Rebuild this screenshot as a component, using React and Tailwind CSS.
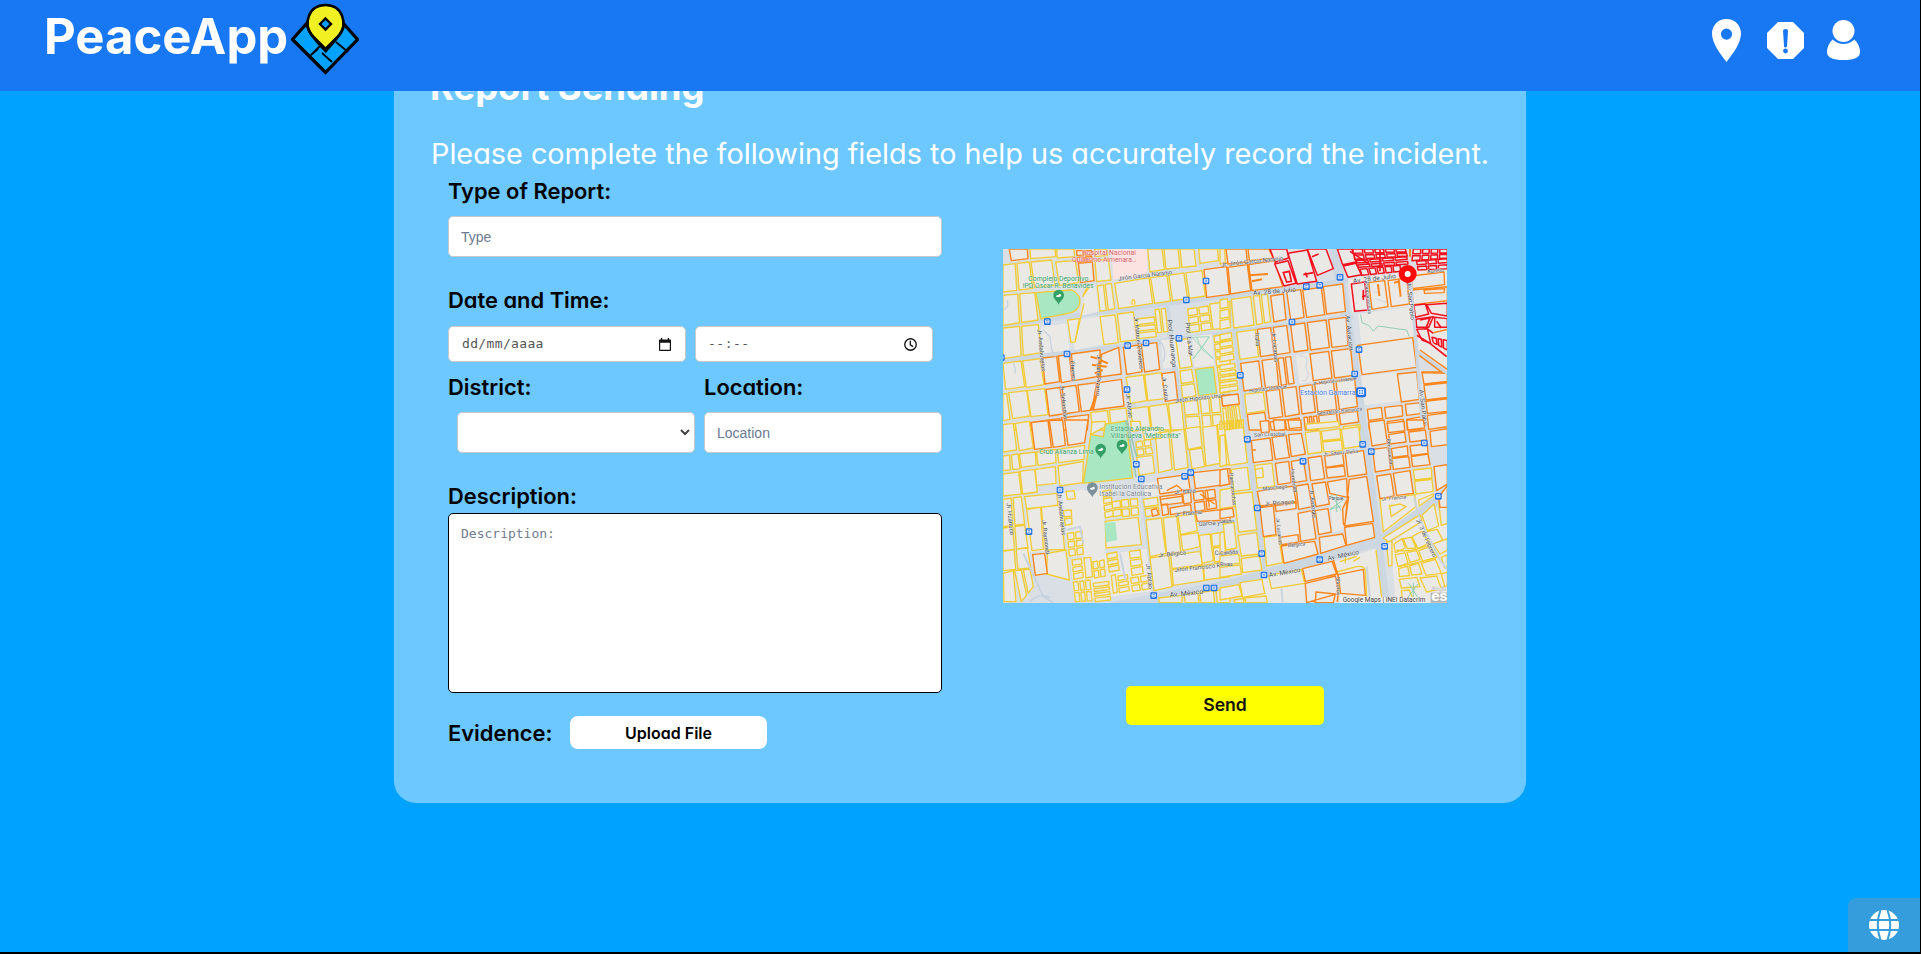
import React from "react";

const YELLOW = "#f2cc35";
const ORANGE = "#fb861c";
const RED = "#f50f1e";
const LAND = "#ebe9e6";

// Splits a quadrilateral (clockwise corners) into cols x rows city blocks.
function split([x0, y0, x1, y1, x2, y2, x3, y3, cols = 1, rows = 1]) {
  const at = (u, v) => {
    const x = (1 - u) * (1 - v) * x0 + u * (1 - v) * x1 + u * v * x2 + (1 - u) * v * x3;
    const y = (1 - u) * (1 - v) * y0 + u * (1 - v) * y1 + u * v * y2 + (1 - u) * v * y3;
    return `${x.toFixed(1)} ${y.toFixed(1)}`;
  };
  const w = Math.hypot(x1 - x0, y1 - y0);
  const h = Math.hypot(x3 - x0, y3 - y0);
  const gu = cols > 1 ? 3 / w : 0;
  const gv = rows > 1 ? 3 / h : 0;
  let d = "";
  for (let i = 0; i < cols; i++) {
    for (let j = 0; j < rows; j++) {
      const a = i / cols + (i ? gu : 0);
      const b = (i + 1) / cols - (i < cols - 1 ? gu : 0);
      const c = j / rows + (j ? gv : 0);
      const e = (j + 1) / rows - (j < rows - 1 ? gv : 0);
      d += `M${at(a, c)}L${at(b, c)}L${at(b, e)}L${at(a, e)}Z`;
    }
  }
  return d;
}

function Blocks({ list, color, width = 4 }) {
  return <path d={list.map(split).join("")} fill={LAND} stroke={color} strokeWidth={width} strokeLinejoin="round" />;
}

function Stops({ at }) {
  return at.map(([x, y]) => (
    <g key={`${x}-${y}`}>
      <rect x={x - 10} y={y - 10} width="20" height="20" rx="4" fill="#1f6fe5" />
      <path d={`M${x - 5} ${y - 5}h10v9h-10zM${x - 5} ${y}h10`} fill="none" stroke="#fff" strokeWidth="2.5" />
    </g>
  ));
}

function Label({ x, y, r = 0, size = 18, fill = "#3f4955", children }) {
  return (
    <text x={x} y={y} transform={`rotate(${r} ${x} ${y})`} fontSize={size} fill={fill} stroke="#fff" strokeWidth="1.2" paintOrder="stroke">
      {children}
    </text>
  );
}

function ParkPin({ x, y, color = "#34a065" }) {
  return (
    <g>
      <path d={`M${x} ${y + 26}C${x - 3} ${y + 14} ${x - 16} ${y + 12} ${x - 16} ${y - 3}a16 16 0 0 1 32 0C${x + 16} ${y + 12} ${x + 3} ${y + 14} ${x} ${y + 26}z`} fill={color} />
      <path d={`M${x - 8} ${y + 2}q2-7 7-4q4-9 9 0q-1 5-8 5z`} fill="#fff" />
    </g>
  );
}

const NW = {
  land: [[210, 242, 300, 230, 312, 313, 225, 330], [122, 262, 200, 250, 208, 330, 130, 340], [483, 300, 526, 297, 535, 380, 490, 385], [576, 288, 636, 282, 642, 376, 584, 382], [258, 138, 286, 137, 297, 215, 240, 228]],
  yellow: [
    [9, 75, 88, 66, 98, 145, 9, 156, 2, 1], [93, 66, 155, 60, 165, 135, 104, 143], [90, 27, 165, 27, 167, 50, 92, 56],
    [167, 66, 226, 62, 236, 128, 178, 136], [170, 27, 222, 27, 224, 50, 172, 54], [285, 62, 325, 57, 333, 120, 290, 125], [284, 27, 320, 27, 322, 46, 286, 50],
    [443, 27, 486, 27, 493, 88, 450, 96], [492, 27, 582, 27, 588, 78, 498, 87, 2, 1], [596, 27, 652, 27, 656, 62, 600, 70],
    [9, 166, 104, 158, 114, 240, 9, 256, 2, 1], [292, 138, 334, 130, 344, 206, 300, 214, 2, 1],
    [344, 130, 447, 113, 458, 190, 356, 206], [452, 113, 606, 92, 616, 168, 464, 190, 3, 1],
    [9, 264, 115, 254, 124, 338, 9, 356, 2, 1], [203, 240, 238, 236, 226, 305, 213, 308],
    [300, 230, 345, 225, 355, 308, 312, 314], [352, 222, 400, 216, 410, 300, 362, 305],
    [410, 237, 463, 231, 469, 290, 417, 296, 1, 3], [465, 209, 496, 205, 503, 274, 473, 278, 2, 1],
    [563, 207, 624, 198, 634, 268, 570, 277, 2, 3], [629, 192, 690, 184, 690, 262, 639, 268],
    [528, 300, 563, 296, 576, 380, 540, 385], [642, 288, 690, 281, 690, 372, 650, 378, 1, 4],
    [9, 370, 63, 363, 74, 440, 17, 448, 1, 1], [68, 363, 120, 356, 132, 434, 79, 442],
    [26, 458, 80, 452, 90, 528, 38, 536], [82, 452, 134, 446, 144, 524, 93, 530], [9, 462, 20, 460, 30, 538, 9, 542],
    [378, 412, 430, 405, 440, 482, 392, 490], [434, 405, 484, 398, 494, 476, 444, 482],
    [540, 393, 575, 388, 588, 468, 548, 474, 1, 2], [652, 382, 690, 378, 690, 455, 662, 460],
    [272, 518, 378, 504, 386, 570, 278, 570, 2, 1], [392, 506, 444, 500, 452, 570, 400, 570], [448, 499, 500, 492, 512, 570, 456, 570],
    [505, 492, 544, 486, 552, 570, 514, 570], [552, 486, 592, 480, 602, 570, 560, 570, 1, 2], [600, 478, 658, 470, 666, 570, 610, 570, 2, 2],
    [9, 556, 88, 545, 92, 570, 9, 570, 2, 1],
  ],
  orange: [
    [28, 27, 82, 27, 84, 56, 34, 62], [230, 32, 274, 32, 276, 62, 232, 66, 2, 2], [235, 70, 277, 66, 282, 122, 242, 128],
    [612, 89, 680, 80, 688, 163, 620, 172], [664, 27, 690, 27, 690, 68, 670, 70],
    [127, 354, 170, 349, 179, 425, 135, 432], [175, 348, 208, 344, 216, 422, 184, 428], [214, 342, 300, 330, 302, 408, 222, 422],
    [300, 345, 356, 322, 364, 402, 290, 412], [370, 322, 416, 315, 426, 395, 380, 403], [424, 314, 470, 308, 479, 388, 434, 396],
    [138, 448, 228, 436, 238, 515, 148, 528, 2, 1], [234, 435, 290, 428, 276, 510, 244, 515], [298, 428, 364, 418, 372, 498, 280, 510],
    [486, 401, 524, 396, 533, 478, 496, 484], [90, 548, 178, 536, 182, 570, 94, 570, 2, 1], [184, 534, 266, 524, 262, 570, 188, 570], [666, 472, 690, 469, 690, 496, 669, 498],
  ],
};

const NE = {
  land: [[414, 222, 578, 200, 586, 288, 424, 312], [228, 345, 268, 340, 276, 425, 238, 432], [424, 408, 532, 396, 545, 482, 434, 496], [384, 116, 682, 80, 682, 190, 396, 214], [584, 196, 682, 190, 682, 390, 596, 330]],
  yellow: [
    [0, 27, 14, 27, 16, 68, 0, 72], [0, 180, 22, 176, 32, 262, 0, 268, 1, 3], [34, 178, 92, 170, 102, 255, 42, 264],
    [100, 168, 142, 163, 152, 245, 110, 254, 2, 1], [0, 284, 34, 278, 42, 358, 0, 366, 1, 4], [50, 277, 106, 269, 116, 350, 60, 358],
    [0, 376, 44, 370, 54, 450, 0, 458, 1, 5], [74, 463, 130, 456, 137, 512, 80, 520], [8, 505, 56, 497, 66, 570, 14, 570, 4, 1], [370, 560, 420, 554, 420, 570, 370, 570],
  ],
  orange: [
    [18, 27, 78, 27, 82, 66, 24, 72], [84, 27, 146, 27, 160, 54, 88, 62], [24, 82, 82, 74, 92, 152, 32, 162], [86, 74, 164, 62, 188, 140, 96, 152],
    [152, 168, 190, 162, 198, 238, 162, 246], [200, 154, 242, 149, 252, 232, 212, 240], [248, 150, 304, 142, 314, 224, 260, 232], [310, 140, 368, 132, 376, 214, 320, 222],
    [112, 268, 152, 263, 162, 344, 122, 350], [160, 262, 200, 257, 210, 338, 170, 344], [212, 255, 254, 249, 264, 330, 222, 336], [262, 248, 318, 240, 328, 322, 272, 330], [326, 239, 378, 232, 384, 316, 336, 322],
    [62, 370, 116, 363, 126, 444, 72, 453], [126, 361, 168, 356, 176, 438, 136, 443], [174, 355, 212, 350, 222, 430, 184, 436, 2, 1], [270, 342, 326, 334, 336, 414, 280, 422], [334, 333, 392, 326, 400, 406, 344, 414],
    [414, 316, 578, 293, 590, 382, 426, 404], [532, 402, 590, 396, 598, 478, 544, 486], [5, 468, 54, 462, 58, 492, 8, 498],
    [138, 453, 178, 448, 188, 530, 148, 536], [186, 446, 228, 440, 238, 522, 196, 530], [238, 440, 276, 434, 286, 516, 246, 522], [284, 432, 340, 425, 350, 508, 294, 516], [348, 424, 404, 417, 412, 500, 358, 508],
    [82, 524, 134, 517, 142, 570, 88, 570], [150, 546, 190, 540, 194, 570, 154, 570], [196, 540, 238, 534, 244, 570, 200, 570], [252, 532, 290, 528, 294, 570, 256, 570, 3, 1], [296, 527, 350, 521, 354, 556, 300, 562], [358, 520, 412, 514, 416, 546, 362, 554],
    [442, 508, 484, 502, 488, 535, 446, 541], [494, 502, 546, 496, 548, 528, 498, 535], [556, 493, 604, 488, 607, 520, 560, 526], [446, 552, 492, 546, 494, 570, 448, 570], [502, 545, 550, 538, 552, 570, 504, 570], [560, 538, 608, 530, 610, 570, 562, 570],
    [606, 398, 682, 400, 682, 424, 612, 432], [612, 436, 682, 428, 682, 472, 618, 480], [618, 484, 682, 476, 682, 514, 622, 520], [622, 526, 682, 518, 682, 560, 626, 568],
    [446, 128, 494, 122, 504, 200, 456, 208], [504, 122, 560, 114, 568, 192, 514, 200], [574, 108, 672, 96, 674, 134, 576, 146], [576, 150, 682, 140, 682, 182, 580, 194], [612, 150, 674, 146, 672, 158, 614, 160],
  ],
  red: [
    [150, 27, 200, 27, 206, 54, 165, 66], [164, 72, 204, 62, 228, 130, 192, 138], [204, 40, 262, 30, 290, 124, 232, 132], [262, 27, 318, 27, 340, 86, 292, 106],
    [352, 27, 396, 27, 408, 66, 368, 74], [370, 78, 408, 70, 424, 104, 384, 112], [398, 27, 556, 27, 562, 48, 404, 58, 5, 2], [408, 62, 560, 50, 564, 72, 416, 82, 4, 2], [420, 88, 540, 76, 542, 94, 426, 106, 5, 1],
    [580, 27, 682, 27, 682, 54, 576, 62, 4, 2], [590, 64, 682, 56, 682, 86, 594, 90, 3, 2], [394, 132, 434, 126, 444, 210, 404, 214],
    [582, 196, 616, 192, 626, 222, 586, 232], [620, 194, 682, 190, 682, 228, 634, 220], [588, 238, 640, 230, 626, 262, 590, 262], [644, 232, 682, 236, 682, 262, 644, 262], [590, 268, 622, 266, 632, 310, 606, 300], [636, 292, 682, 302, 682, 330, 640, 308, 3, 1],
  ],
};

const SW = {
  land: [[240, 214, 310, 204, 316, 406, 250, 412], [80, 262, 180, 250, 196, 390, 84, 396], [430, 190, 470, 184, 476, 226, 436, 232], [212, 418, 440, 386, 452, 514, 224, 545], [186, 218, 250, 208, 260, 404, 206, 412]],
  yellow: [
    [9, 14, 40, 10, 50, 90, 9, 96], [46, 10, 88, 4, 100, 84, 58, 92], [9, 108, 54, 102, 60, 146, 9, 152, 2, 1], [58, 102, 106, 96, 108, 136, 64, 142],
    [110, 96, 166, 88, 168, 128, 114, 136], [172, 88, 254, 76, 252, 118, 176, 128], [9, 162, 56, 156, 64, 222, 9, 228], [60, 154, 104, 148, 112, 216, 68, 222], [106, 148, 166, 140, 168, 190, 110, 196],
    [174, 138, 250, 124, 248, 188, 180, 198], [276, 6, 316, 4, 316, 20, 272, 44], [392, 4, 420, 4, 424, 30, 396, 34], [9, 238, 64, 230, 74, 312, 9, 320, 2, 1], [74, 230, 170, 220, 174, 256, 80, 266],
    [9, 324, 74, 316, 84, 384, 9, 392, 2, 1], [80, 268, 122, 262, 130, 388, 96, 392], [124, 262, 180, 254, 194, 388, 136, 390], [9, 394, 82, 382, 92, 444, 9, 452, 2, 1], [10, 460, 40, 452, 48, 545, 12, 545], [44, 452, 90, 448, 100, 500, 64, 545, 2, 1],
    [142, 400, 198, 390, 208, 480, 140, 462], [198, 214, 222, 212, 226, 236, 202, 238], [190, 272, 214, 270, 216, 312, 196, 316, 1, 2], [202, 340, 246, 334, 250, 402, 208, 408, 2, 3],
    [216, 420, 244, 416, 250, 472, 222, 478, 1, 3], [252, 414, 272, 412, 278, 470, 258, 474], [278, 426, 312, 420, 316, 468, 284, 474, 2, 2], [220, 486, 270, 480, 276, 542, 226, 545, 3, 2], [280, 490, 326, 484, 332, 540, 286, 545, 1, 4],
    [320, 402, 350, 396, 358, 450, 328, 456, 1, 3], [388, 394, 420, 390, 430, 460, 396, 466, 1, 3], [334, 466, 346, 464, 352, 516, 340, 520], [354, 468, 382, 464, 388, 512, 358, 518, 1, 3], [392, 474, 444, 466, 450, 506, 398, 514, 2, 2],
    [308, 214, 332, 210, 340, 288, 316, 294, 1, 4], [336, 246, 360, 242, 364, 286, 340, 290, 1, 2], [364, 240, 412, 236, 416, 284, 368, 290, 2, 2], [316, 304, 414, 292, 424, 374, 318, 384],
    [408, 66, 450, 58, 458, 100, 412, 106, 2, 2], [410, 112, 458, 106, 464, 158, 418, 166], [428, 30, 478, 24, 484, 54, 434, 60], [466, 40, 506, 34, 516, 148, 476, 158], [512, 34, 552, 28, 564, 142, 524, 150],
    [556, 26, 600, 20, 606, 80, 564, 88], [568, 90, 606, 84, 614, 140, 576, 146], [608, 22, 650, 16, 660, 130, 618, 138], [652, 14, 690, 10, 690, 72, 660, 78], [658, 84, 690, 78, 690, 134, 664, 138],
    [430, 238, 472, 232, 478, 284, 438, 290, 1, 2], [438, 300, 484, 294, 498, 400, 450, 410], [490, 294, 530, 288, 542, 396, 500, 402], [534, 288, 584, 282, 592, 332, 542, 344], [542, 346, 594, 338, 600, 380, 548, 392],
    [450, 414, 506, 406, 516, 500, 462, 512], [512, 406, 600, 394, 608, 434, 516, 446], [516, 450, 608, 438, 612, 482, 520, 496], [598, 346, 630, 342, 640, 422, 606, 430], [634, 342, 690, 334, 690, 372, 638, 380], [640, 384, 690, 378, 690, 420, 644, 426],
    [610, 436, 690, 424, 690, 470, 614, 480], [476, 534, 546, 526, 546, 548, 478, 548], [552, 524, 640, 512, 644, 548, 556, 548, 2, 1], [648, 512, 690, 506, 690, 548, 652, 548],
  ],
  orange: [
    [94, 8, 144, 2, 154, 82, 104, 88], [148, 2, 188, 0, 196, 76, 160, 82], [194, 0, 264, 0, 254, 68, 204, 76], [98, 404, 134, 400, 142, 460, 106, 466],
    [472, 176, 564, 164, 570, 208, 480, 222], [580, 158, 690, 146, 690, 192, 586, 206], [480, 230, 546, 222, 548, 248, 484, 256], [484, 254, 502, 252, 506, 282, 488, 286], [510, 264, 572, 254, 574, 274, 512, 284], [548, 222, 572, 218, 574, 248, 552, 252],
    [580, 216, 644, 208, 650, 264, 586, 274, 2, 2], [586, 278, 690, 266, 690, 300, 592, 304], [454, 270, 470, 266, 476, 284, 458, 288],
  ],
};

const SE = {
  land: [[170, 278, 232, 270, 240, 342, 180, 350], [328, 226, 372, 230, 368, 330, 338, 336], [154, 502, 224, 496, 226, 548, 160, 548], [340, 425, 468, 386, 488, 548, 345, 548], [512, 370, 682, 250, 682, 548, 528, 548], [484, 232, 640, 214, 640, 230, 490, 340], [60, 490, 250, 450, 256, 548, 64, 548]],
  yellow: [
    [0, 4, 70, 0, 70, 22, 0, 28, 8, 1], [14, 30, 70, 22, 82, 128, 28, 136], [0, 48, 14, 44, 20, 134, 0, 140], [34, 148, 82, 142, 90, 208, 42, 214], [42, 222, 96, 216, 110, 330, 56, 336], [0, 210, 36, 204, 42, 260, 0, 266],
    [10, 312, 42, 308, 50, 384, 18, 390], [54, 346, 110, 338, 118, 402, 64, 408], [0, 338, 12, 336, 16, 396, 0, 400], [0, 408, 56, 402, 64, 462, 0, 472, 1, 2], [64, 416, 118, 408, 126, 450, 68, 458], [132, 352, 176, 346, 188, 428, 140, 438],
    [104, 136, 156, 130, 164, 198, 112, 204], [106, 148, 128, 144, 130, 172, 108, 174], [256, 38, 300, 32, 306, 96, 264, 102], [304, 34, 360, 26, 362, 56, 308, 62], [308, 66, 364, 60, 368, 92, 312, 96], [364, 28, 416, 20, 422, 78, 372, 86], [258, 12, 356, 4, 358, 20, 260, 30],
    [580, 150, 634, 144, 636, 174, 584, 180], [584, 184, 636, 178, 640, 214, 588, 222], [480, 238, 584, 224, 588, 260, 490, 336], [596, 240, 640, 222, 640, 228, 598, 258],
    [490, 354, 600, 284, 606, 304, 506, 366], [606, 286, 642, 252, 656, 318, 622, 332], [656, 248, 682, 262, 682, 310, 664, 316], [500, 366, 516, 362, 516, 436, 506, 438], [522, 372, 546, 356, 556, 384, 526, 398], [550, 356, 574, 352, 588, 384, 562, 386],
    [576, 350, 606, 334, 626, 370, 594, 386], [608, 338, 652, 328, 668, 360, 634, 374], [526, 404, 590, 392, 600, 418, 534, 440, 2, 1], [596, 392, 630, 380, 652, 412, 608, 424], [536, 446, 596, 430, 606, 462, 538, 470, 2, 1], [604, 430, 646, 418, 664, 460, 618, 466],
    [640, 372, 682, 356, 682, 390, 660, 402], [664, 412, 682, 404, 682, 440, 674, 444], [538, 478, 590, 472, 600, 500, 544, 504], [600, 474, 650, 468, 664, 506, 620, 516], [664, 462, 682, 456, 682, 496, 674, 500], [544, 512, 568, 510, 582, 545, 548, 545],
    [60, 488, 126, 478, 134, 520, 68, 532], [0, 504, 56, 494, 66, 528, 0, 540, 1, 1], [146, 466, 244, 448, 254, 490, 154, 506], [74, 534, 138, 528, 142, 548, 78, 548], [42, 540, 70, 536, 72, 548, 44, 548],
  ],
  orange: [
    [94, 62, 150, 54, 158, 120, 100, 128], [156, 52, 198, 46, 208, 112, 166, 118], [206, 44, 244, 40, 256, 102, 214, 110], [120, 4, 146, 2, 148, 36, 124, 38], [160, 0, 194, 0, 196, 28, 164, 32], [204, 0, 242, 0, 244, 22, 208, 26], [0, 150, 22, 146, 28, 192, 0, 198],
    [166, 130, 206, 124, 214, 188, 174, 194], [214, 124, 250, 118, 260, 182, 222, 188], [264, 114, 304, 108, 314, 176, 272, 182], [314, 108, 368, 100, 372, 134, 318, 142], [318, 144, 372, 138, 376, 168, 322, 174], [376, 100, 430, 92, 440, 162, 384, 170],
    [112, 214, 220, 198, 228, 244, 120, 258], [120, 262, 160, 256, 168, 344, 130, 350], [166, 254, 228, 246, 228, 266, 168, 274], [228, 198, 264, 192, 276, 260, 236, 268], [276, 192, 316, 186, 328, 252, 288, 260], [322, 186, 380, 176, 382, 232, 330, 220],
    [388, 178, 440, 170, 460, 304, 374, 318], [368, 266, 386, 230, 374, 318, 370, 310], [234, 280, 276, 272, 288, 356, 242, 364], [286, 272, 324, 266, 334, 336, 296, 344], [180, 352, 234, 344, 236, 366, 184, 374], [184, 378, 284, 364, 294, 402, 192, 430],
    [298, 352, 368, 342, 378, 376, 302, 400], [374, 322, 458, 310, 464, 352, 380, 376], [0, 270, 38, 264, 42, 290, 0, 296],
    [446, 6, 492, 0, 502, 70, 456, 78], [502, 10, 552, 4, 554, 32, 506, 38], [506, 44, 554, 36, 558, 66, 510, 72], [560, 0, 610, 0, 614, 24, 564, 30], [566, 36, 616, 30, 620, 60, 570, 66], [458, 88, 504, 82, 512, 148, 466, 156], [514, 86, 562, 78, 564, 106, 518, 112], [516, 116, 566, 110, 570, 142, 520, 148], [570, 78, 622, 72, 624, 100, 574, 106], [574, 110, 624, 102, 630, 134, 578, 140],
    [630, 34, 682, 26, 682, 74, 634, 80], [470, 168, 512, 162, 522, 228, 480, 236], [520, 160, 570, 152, 580, 220, 530, 226], [642, 140, 682, 134, 682, 192, 650, 212], [656, 232, 682, 196, 682, 262, 660, 262],
    [248, 446, 336, 424, 350, 462, 256, 484], [256, 490, 346, 468, 356, 520, 260, 548], [354, 464, 430, 448, 436, 526, 362, 520], [288, 516, 346, 522, 340, 548, 286, 548],
  ],
};

function Quadrant({ data, x, y, children }) {
  return (
    <g transform={`translate(${x} ${y}) scale(.33333)`}>
      <path d={data.land.map(split).join("")} fill={LAND} />
      <Blocks list={data.yellow} color={YELLOW} />
      <Blocks list={data.orange} color={ORANGE} width={4.2} />
      {data.red && <Blocks list={data.red} color={RED} width={4.4} />}
      {children}
    </g>
  );
}

function IncidentMap() {
  return (
    <svg viewBox="0 0 444 354" className="block h-[354px] w-[444px]" fontFamily="Roboto, sans-serif">
      <rect width="444" height="354" fill="#d9dfe4" />
      <g fill="none" stroke="#ccd7e1">
        <path d="M331 -4L350 110L366 230L382 354" strokeWidth="10" />
        <path d="M0 76L230 46L444 20M0 112L210 86L350 68" strokeWidth="5" />
        <path d="M100 360L230 335L376 292L444 244" strokeWidth="10" />
        <path d="M160 30L170 110L190 230M228 40L245 190L264 350" strokeWidth="6" />
        <path d="M119 60L135 200L152 345" strokeWidth="5" />
      </g>

      <Quadrant data={NW} x={-3} y={-9}>
        <path d="M335 27H440L443 105L340 118Z" fill="#fbe3e2" />
        <path d="M108 158L215 150Q245 165 239 190Q236 215 200 221L122 236Z" fill="#a9e7c2" stroke={YELLOW} strokeWidth="4" />
        <path d="M586 388L640 381L650 460L596 468Z" fill="#a9e7c2" stroke={YELLOW} strokeWidth="4" />
        <path d="M312 555L378 540L384 570H314Z" fill="#a9e7c2" />
        <path d="M576 292L628 290L604 326L640 356M604 326L580 356M604 326L590 292M576 292L640 356M628 290L580 356" fill="none" stroke="#9ed8bd" strokeWidth="3" />
        <path d="M262 140L248 170L268 140M252 190L226 300M396 195V182q5-6 8 0v12" fill="none" stroke={YELLOW} strokeWidth="4" />
        <path d="M272 350l30 8M276 374l44 6M284 400l24-10M304 345l-12 110L272 510M300 360l24 10" fill="none" stroke={ORANGE} strokeWidth="6" />
        <path d="M130 270l20 20l5 40l10 20M482 305q20 30 8 60M10 210q20-10 10-30M40 370q10 20 4 30" fill="none" stroke="#c9d3df" strokeWidth="4" />
        <Label x={355} y={122} r={-7}>Jirón García Naranjo</Label>
        <Label x={524} y={488} r={-6}>Jirón Hipólito Unanue</Label>
        <Label x={502} y={240} r={84} size={20}>Prol. Huamanga</Label>
        <Label x={556} y={248} r={84} size={19}>Prol. La Mar</Label>
        <Label x={112} y={268} r={84}>Jr. Andahuaylas</Label>
        <Label x={402} y={230} r={84}>Jr. Manuel Cisneros</Label>
        <Label x={378} y={462} r={84}>Jr. Abtao</Label>
        <Label x={292} y={344} r={92}>Jr. Luna Pizarro</Label>
        <Label x={486} y={410} r={84}>Jr. Canta</Label>
        <Label x={210} y={362} r={84}>Obreros</Label>
        <Label x={180} y={436} r={84}>Jr. Sebastián</Label>
        <Label x={246} y={44} size={20.5} fill="#de5560">Hospital Nacional</Label>
        <Label x={216} y={66} size={20.5} fill="#de5560">Guillermo Almenara…</Label>
        <Label x={85} y={124} size={20.5} fill="#2f9a62">Complejo Deportivo</Label>
        <Label x={68} y={145} size={20.5} fill="#2f9a62">IPD Oscar R. Benavides</Label>
        <ParkPin x={176} y={168} />
        <Stops at={[[142, 245], [201, 342], [383, 317], [438, 309], [537, 295], [559, 180], [618, 123], [381, 449], [4, 353]]} />
      </Quadrant>

      <Quadrant data={NE} x={217} y={-9}>
        <path d="M422 224L426 248L446 256L460 274L474 258L530 266L560 270L568 290" fill="none" stroke="#8fceb4" strokeWidth="3" />
        <path d="M236 350q20-8 26 12q-10 20 4 40q-6 24-20 20M460 155l20 4M466 176l34 12" fill="none" stroke="#d9dade" strokeWidth="4" />
        <path d="M88 106l56-4M96 124l30-6M474 132l4 36M536 120l6 50M522 128l18-4M570 50V27" fill="none" stroke={ORANGE} strokeWidth="6" />
        <path d="M190 98l18-4l6 30l-14 2zM250 104l30-6M262 112l-6-14M276 50l20-8M426 170l14-4M430 150V180M600 240l30-6l-12 30l22 16M590 286l40 24l50 40M650 244l14 20M390 34l60 40M480 30v64" fill="none" stroke={RED} strokeWidth="5" />
        <path d="M592 336L682 400M572 120L608 570" fill="none" stroke="#cbd5df" strokeWidth="9" />
        <path d="M600 330L682 388M598 346L664 396H604M640 278l42-10" fill="none" stroke={ORANGE} strokeWidth="4.5" />
        <Label x={4} y={80} r={-6}>Jr. Jirón García Naranjo</Label>
        <Label x={100} y={166} r={-5} size={20}>Av. 28 de Julio</Label>
        <Label x={400} y={130} r={-7} size={20}>Av. 28 de Julio</Label>
        <Label x={622} y={100} r={-6} size={16}>Aurelio</Label>
        <Label x={376} y={226} r={84} size={20}>Av. Aviación</Label>
        <Label x={560} y={130} r={84} size={19}>Av San Pablo</Label>
        <Label x={598} y={450} r={84} size={19}>Av San Pablo</Label>
        <Label x={104} y={280} r={84}>Italia</Label>
        <Label x={154} y={276} r={84}>Jr. Lucanas</Label>
        <Label x={276} y={436} r={-7} size={16}>Jr. Hipólito Unanue</Label>
        <Label x={88} y={458} r={-7} size={16}>Hipólito Unanue</Label>
        <Label x={290} y={526} r={-6} size={16}>Sebastián Barranca</Label>
        <Label x={434} y={126} r={84} size={16}>Parinacochas</Label>
        <Label x={240} y={466} size={21} fill="#3b78e0">Estación Gamarra</Label>
        <rect x="408" y="442" width="30" height="30" rx="6" fill="#1f6fe5" />
        <path d="M415 449h16v14h-16zM415 456h16M423 449v14" fill="none" stroke="#fff" strokeWidth="3" />
        <Stops at={[[259, 140], [299, 136], [360, 112], [216, 246], [417, 329], [404, 402], [61, 406]]} />
        <path d="M563 130q-27-8-27-28a27 27 0 0 1 54 0q0 20-27 28z" fill="#ff0808" />
        <circle cx="563" cy="102" r="9" fill="#fff" />
      </Quadrant>

      <Quadrant data={SW} x={-3} y={171}>
        <path d="M272 44L310 50L316 12L378 3L398 174L250 190Z" fill="#a9e7c2" stroke={YELLOW} strokeWidth="4" />
        <path d="M314 308L346 305L352 360L318 367Z" fill="#a9e7c2" />
        <path d="M378 0L400 120L408 172M380 0L410 110" stroke="#9cc9b5" strokeWidth="5" fill="none" />
        <path d="M500 212l30-16l24 20M480 238l70-10M600 222l44 30M622 212l6 50" fill="none" stroke={ORANGE} strokeWidth="4" />
        <path d="M70 400L130 530L160 548M90 545q30-30 60-12M200 330l40-10l10 50M360 400l16 80" fill="none" stroke="#c9d3df" strokeWidth="6" />
        <Label x={332} y={32} size={20.5} fill="#2f9a62">Estadio Alejandro</Label>
        <Label x={332} y={53} size={20.5} fill="#2f9a62">Villanueva "Metrochita"</Label>
        <Label x={118} y={102} size={20.5} fill="#2f9a62">Club Alianza Lima</Label>
        <Label x={298} y={206} size={20.5} fill="#75808b">Institución Educativa</Label>
        <Label x={298} y={227} size={20.5} fill="#75808b">Isabel la Católica</Label>
        <Label x={172} y={220} r={84}>Jr. Andahuaylas</Label>
        <Label x={20} y={250} r={84}>Jr. Huánuco</Label>
        <Label x={126} y={300} r={84}>Jr. Raymondi</Label>
        <Label x={438} y={432} r={84} size={19}>Jr. Abtao</Label>
        <Label x={524} y={222} r={-4}>Jr. Italia</Label>
        <Label x={524} y={290} r={-6}>Jr. Francia</Label>
        <Label x={596} y={318} r={-4}>García y León</Label>
        <Label x={476} y={412} r={-6}>Jr. Bélgica</Label>
        <Label x={644} y={405} r={-4}>Canadá</Label>
        <Label x={524} y={456} r={-6}>Jirón Francisco Rivas</Label>
        <Label x={510} y={532} r={-6} size={21}>Av. México</Label>
        <ParkPin x={302} y={90} />
        <ParkPin x={366} y={78} />
        <ParkPin x={277} y={206} color="#7c909c" />
        <Stops at={[[409, 133], [424, 177], [554, 169], [572, 158], [180, 210], [87, 335], [461, 527], [619, 504], [642, 504]]} />
      </Quadrant>

      <Quadrant data={SE} x={217} y={171}>
        <path d="M328 234L372 238L330 268L364 258M350 222V276M336 226l28 46" fill="none" stroke="#8fceb4" strokeWidth="3" />
        <path d="M566 490l30 46M594 492l-30 40M580 488v44" fill="none" stroke="#8fceb4" strokeWidth="3" />
        <path d="M360 425l50-16M376 430V412M400 424l20-12M508 254l6 36l44-30l-18-8l-30 6M350 456L410 440Q430 436 436 450L440 530M468 390L486 540M530 390Q570 400 630 374M536 440Q590 430 650 412" fill="none" stroke={YELLOW} strokeWidth="4" />
        <path d="M582 232L600 300L660 420L682 450M184 506l4 40M440 440l10 100" fill="none" stroke="#cbd5df" strokeWidth="6" />
        <path d="M96 90h12M120 262l110-14M340 420l18 60l-6 66" fill="none" stroke={ORANGE} strokeWidth="5" />
        <Label x={102} y={50} r={-2} size={16}>San Cristóbal</Label>
        <Label x={310} y={108} r={-5} size={16}>Jr. Sáenz Peña</Label>
        <Label x={128} y={212} r={-6} size={16}>Manchego</Label>
        <Label x={134} y={258} r={-5}>Jr. Pisagua</Label>
        <Label x={204} y={382} r={-6} size={16}>Bélgica</Label>
        <Label x={212} y={148} r={84} size={16}>Humboldt</Label>
        <Label x={268} y={208} r={84}>Jr. Antonio</Label>
        <Label x={28} y={160} r={84} size={16}>Parinacochas</Label>
        <Label x={168} y={294} r={84} size={16}>Jr. Lucanas</Label>
        <Label x={500} y={56} r={84} size={16}>Renovación</Label>
        <Label x={326} y={240} size={14}>Parque</Label>
        <Label x={486} y={242} r={-5} size={16}>Jr. Francia</Label>
        <Label x={588} y={300} r={66} size={18}>Jr. 3 de Febrero</Label>
        <Label x={348} y={470} r={88} size={16}>Obreros</Label>
        <Label x={148} y={472} r={-10} size={20}>Av. México</Label>
        <Label x={324} y={422} r={-12} size={20}>Av. México</Label>
        <Label x={0} y={308} size={16}>León</Label>
        <Label x={0} y={406} r={-5} size={16}>Canadá</Label>
        <Label x={0} y={438} size={16}>Rivas</Label>
        <Stops at={[[82, 58], [249, 124], [428, 73], [454, 95], [613, 69], [655, 229], [112, 264], [125, 401], [299, 419], [132, 465], [494, 379]]} />
        <rect x="362" y="531" width="258" height="20" fill="#f3f2f0" opacity=".85" />
        <text x="368" y="547" fontSize="19.5" fill="#454545">Google Maps | INEI Datacrim</text>
        <path d="M632 518h50v30h-50z" fill="#b5b4b2" />
        <text x="636" y="509" fontSize="13" fontWeight="700" fill="#fff" stroke="#999" strokeWidth="2" paintOrder="stroke">Google</text>
        <text x="634" y="544" fontSize="46" fontWeight="700" fill="#fff">es</text>
      </Quadrant>
    </svg>
  );
}

function Logo() {
  return (
    <svg viewBox="0 0 68 72" className="h-[72px] w-[68px]">
      <path d="M16 20L1.500 36.500L34.500 69.500L66.500 36.500L52 20Z" fill="#00a2ff" stroke="#000" strokeWidth="3.200" />
      <path d="M14 21L35 50L55 21L44 16H24Z" fill="#000" />
      <path d="M19 53L30 42M45 39L57 49M20 52L27 46M31 50l10 9" stroke="#000" strokeWidth="1.800" fill="none" />
      <path d="M34.500 46L20.500 32C12.500 21 17 2 34.500 2S56.500 21 48.500 32Z" fill="#f0f022" stroke="#000" strokeWidth="2.600" />
      <path d="M16 22Q17 30 34.500 48Q52 30 53 22" fill="none" stroke="#000" strokeWidth="2.500" />
      <path d="M34.500 15.500L40 21L34.500 26.500L29 21Z" fill="#00a2ff" stroke="#000" strokeWidth="2.400" />
    </svg>
  );
}

const labelClass = "h-[26px] text-[21.9px] leading-[26px] font-semibold text-black [font-feature-settings:'cv11']";
const fieldClass = "rounded-[5px] border border-[#c9c9c9] bg-white";

export default function App() {
  return (
    <div className="h-[954px] w-[1921px] overflow-hidden bg-black font-['Inter',sans-serif]">
      <div className="relative flex h-[952px] w-[1920px] flex-col overflow-hidden bg-[#00a2ff]">
        <header className="flex h-[91px] shrink-0 items-start justify-between bg-[#1877f2] pr-[60px] pl-[44px]">
          <div className="flex">
            <span className="w-[247px] pt-[7px] text-[49px] leading-[60px] font-bold whitespace-nowrap text-white">PeaceApp</span>
            <div className="pt-[3px]">
              <Logo />
            </div>
          </div>
          <nav className="flex items-start text-white">
            <svg viewBox="0 0 29 43" className="mt-[19px] h-[43px] w-[29px]">
              <path fill="currentColor" fillRule="evenodd" d="M14.500 0C6.500 0 0 6 0 14.500C0 24 7.500 34 14.500 43C21.500 34 29 24 29 14.500C29 6 22.500 0 14.500 0ZM14.500 9.500a5.600 5.600 0 1 1 0 11.200a5.600 5.600 0 0 1 0-11.200Z" />
            </svg>
            <svg viewBox="0 0 37 37" className="mt-[22px] ml-[26px] h-[37px] w-[37px]">
              <path fill="currentColor" d="M11 0H26L37 11V26L26 37H11L0 26V11Z" />
              <path fill="#1877f2" d="M16 8.500q0-1.500 2.500-1.500t2.500 1.500L20 24.500q-.2 1-1.500 1t-1.500-1Z" />
              <circle cx="18.500" cy="29" r="2.400" fill="#1877f2" />
            </svg>
            <svg viewBox="0 0 33 40" className="mt-[20px] ml-[23px] h-[40px] w-[33px]">
              <circle cx="16.500" cy="11" r="11" fill="currentColor" />
              <path fill="currentColor" d="M5.500 19.500Q16.500 28.500 27.500 19.500Q33 25 33 32Q33 40 16.500 40T0 32Q0 25 5.500 19.500Z" />
            </svg>
          </nav>
        </header>

        <main className="flex min-h-0 flex-1 flex-col items-center overflow-hidden">
          <section className="-mt-[40px] h-[752px] w-[1132px] shrink-0 rounded-[22px] bg-[#6dc8ff] px-[37px]">
            <h1 className="-ml-px pt-[14px] text-[36.4px] leading-[44px] font-bold text-white [font-feature-settings:'cv11']">Report Sending</h1>
            <p className="mt-[27px] h-[35px] text-[28.8px] leading-[36px] whitespace-nowrap text-white [font-feature-settings:'cv11']">
              Please complete the following fields to help us accurately record the incident.
            </p>

            <div className="flex">
              <form className="mt-[7px] ml-[17px] flex w-[494px] flex-col">
                <label className={labelClass}>Type of Report:</label>
                <input placeholder="Type" className={`${fieldClass} mt-[12px] h-[41px] px-3 font-['Liberation_Sans',sans-serif] text-[14px] placeholder:text-[#6b7a90]`} />

                <label className={`${labelClass} mt-[30px]`}>Date and Time:</label>
                <div className="mt-[13px] flex gap-[9px] font-['DejaVu_Sans_Mono',monospace] text-[13px] text-[#555]">
                  <div className={`${fieldClass} flex h-[36px] w-[238px] items-center justify-between pr-[14px] pl-[13px]`}>
                    <span className="tracking-[0.35px]">dd/mm/aaaa</span>
                    <svg viewBox="0 0 13 14" className="h-[13px] w-[12px]">
                      <path fill="#111" fillRule="evenodd" d="M2 0h1.500v1.500h6V0H11v1.500h1q1 0 1 1V13q0 1-1 1H1q-1 0-1-1V2.500q0-1 1-1h1ZM1.300 5v7.700h10.400V5Z" />
                    </svg>
                  </div>
                  <div className={`${fieldClass} flex h-[36px] w-[238px] items-center justify-between pr-[15px] pl-[12px]`}>
                    <span className="tracking-[0.5px]">--:--</span>
                    <svg viewBox="0 0 14 14" className="h-[13px] w-[13px]" fill="none" stroke="#111" strokeWidth="1.400">
                      <circle cx="7" cy="7" r="6.200" />
                      <path d="M6.800 3v4.300l3 2" />
                    </svg>
                  </div>
                </div>

                <div className="mt-[12px] flex">
                  <label className={`${labelClass} w-[256px]`}>District:</label>
                  <label className={labelClass}>Location:</label>
                </div>
                <div className="mt-[12px] flex gap-[9px] pl-[9px]">
                  <div className={`${fieldClass} flex h-[41px] w-[238px] items-center justify-end pr-[4px]`}>
                    <svg viewBox="0 0 10 7" className="h-[7px] w-[10px]" fill="none" stroke="#444" strokeWidth="2">
                      <path d="M1 1l4 4l4-4" />
                    </svg>
                  </div>
                  <input placeholder="Location" className={`${fieldClass} h-[41px] w-[238px] px-3 font-['Liberation_Sans',sans-serif] text-[14px] placeholder:text-[#6b7a90]`} />
                </div>

                <label className={`${labelClass} mt-[30px]`}>Description:</label>
                <textarea placeholder="Description:" className="mt-[4px] h-[180px] resize-none rounded-[5px] border border-black bg-white px-3 py-[12px] font-['DejaVu_Sans_Mono',monospace] text-[13px] leading-[16px] placeholder:text-[#6f7c8c]" />

                <div className="mt-[23px] flex h-[33px] items-center">
                  <span className={`${labelClass} w-[122px]`}>Evidence:</span>
                  <button type="button" className="h-[33px] w-[197px] rounded-[8px] bg-white text-[16px] font-semibold text-black [font-feature-settings:'cv11']">Upload File</button>
                </div>
              </form>

              <div className="mt-[78px] ml-[61px] flex w-[444px] flex-col items-center">
                <IncidentMap />
                <button type="button" className="mt-[83px] h-[39px] w-[198px] rounded-[5px] bg-[#ffff00] pb-px text-[17.6px] font-semibold text-[#111]">Send</button>
              </div>
            </div>
          </section>
        </main>

        <button type="button" className="absolute right-0 bottom-0 flex h-[54px] w-[72px] items-start rounded-tl-[8px] bg-[#359ddc] pt-[12px] pl-[21px]">
          <svg viewBox="0 0 30 30" className="h-[30px] w-[30px]">
            <circle cx="15" cy="15" r="15" fill="#fff" />
            <path d="M0 10H30M0 20H30M11.500 0Q6 15 11.500 30M18.500 0Q24 15 18.500 30" fill="none" stroke="#359ddc" strokeWidth="2" />
          </svg>
        </button>
      </div>
    </div>
  );
}
